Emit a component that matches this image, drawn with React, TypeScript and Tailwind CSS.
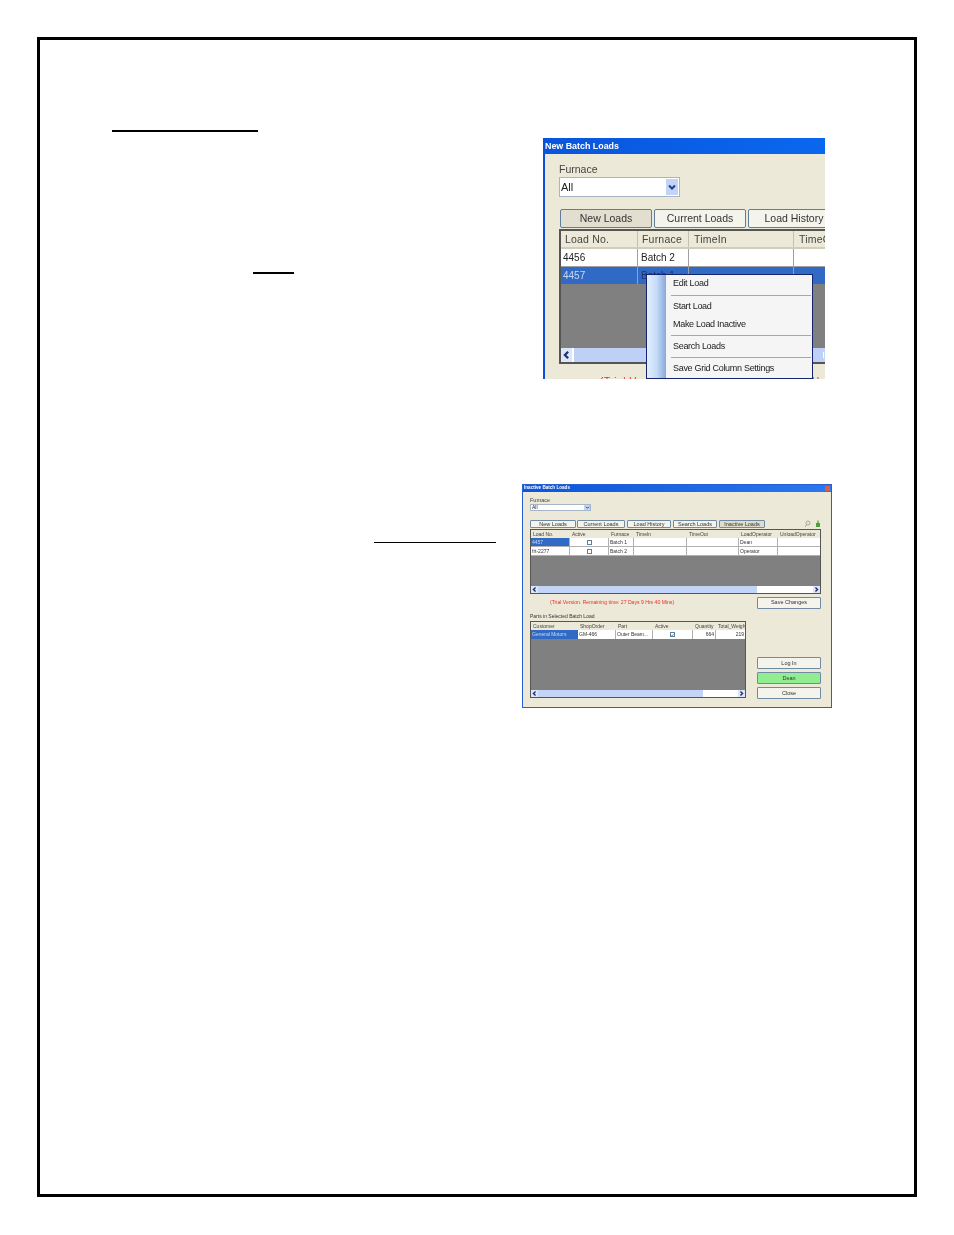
const sans = "font-['Liberation_Sans',Arial,sans-serif]";

function Chevron({ className }: { className: string }) {
  return (
    <svg viewBox="0 0 10 10" className={className} fill="none" stroke="#1f3f8f" strokeWidth="2">
      <path d="M2 3.5 L5 6.5 L8 3.5" />
    </svg>
  );
}

function Arrow({ dir }: { dir: "left" | "right" }) {
  return (
    <svg viewBox="0 0 10 10" className="w-full h-full" fill="none" stroke="#1f2f6f" strokeWidth="2">
      <path d={dir === "left" ? "M6.5 2 L3.5 5 L6.5 8" : "M3.5 2 L6.5 5 L3.5 8"} />
    </svg>
  );
}

function MenuItem({ label, className }: { label: string; className: string }) {
  return <div className={`pl-[7px] text-[9px] leading-[12px] text-[#222] tracking-[-0.3px] whitespace-nowrap ${className}`}>{label}</div>;
}

function MenuSep({ className }: { className: string }) {
  return <div className={`ml-[5px] mr-[1px] h-px bg-[#8fa9d8] ${className}`}></div>;
}

function ContextMenu() {
  return (
    <div className="absolute left-[101px] top-[136px] w-[167px] h-[105px] flex bg-[#f5f5f5] border border-[#14246e]">
      <div className="w-[19px] bg-gradient-to-r from-[#e3efff] via-[#c6dcf8] to-[#88a8dc]"></div>
      <div className="flex-1">
        <MenuItem label="Edit Load" className="mt-[2px]" />
        <MenuSep className="mt-[6px]" />
        <MenuItem label="Start Load" className="mt-[4px]" />
        <MenuItem label="Make Load Inactive" className="mt-[6px]" />
        <MenuSep className="mt-[5px]" />
        <MenuItem label="Search Loads" className="mt-[4px]" />
        <MenuSep className="mt-[5px]" />
        <MenuItem label="Save Grid Column Settings" className="mt-[4px]" />
      </div>
    </div>
  );
}

function Tab1({ label, className }: { label: string; className: string }) {
  return (
    <div className={`h-[19px] shrink-0 flex items-center justify-center border border-[#5d7f9b] rounded-[2px] text-[10.5px] text-[#333] ${className}`}>
      {label}
    </div>
  );
}

function NewBatchLoads() {
  return (
    <div className={`relative w-[282px] h-[241px] overflow-hidden bg-[#ece9d8] border-l-2 border-[#0b4fd8] blur-[0.3px] ${sans}`}>
      <div className="h-[16px] bg-gradient-to-r from-[#0a55dc] to-[#0a68ee] text-white text-[8.9px] leading-[17px] font-bold whitespace-nowrap">
        New Batch Loads
      </div>
      <div className="pl-[14px] w-[400px]">
        <div className="pt-[9px] h-[23px] text-[10.5px] leading-[12px] text-[#444]">Furnace</div>
        <div className="w-[121px] h-[20px] flex items-center justify-between bg-white border border-[#a5b6c9] pl-[1px] pr-[1px] text-[11px] text-[#222]">
          <span>All</span>
          <div className="w-[12px] h-[16px] bg-[#c3d4f7] flex items-center justify-center">
            <Chevron className="w-[10px] h-[10px]" />
          </div>
        </div>
        <div className="mt-[12px] flex gap-[2px] pl-[1px]">
          <Tab1 label="New Loads" className="w-[92px] bg-[#e2dfd0]" />
          <Tab1 label="Current Loads" className="w-[92px] bg-[#f4f3ec]" />
          <Tab1 label="Load History" className="w-[92px] bg-[#f4f3ec]" />
        </div>
        <div className="mt-[1px] h-[135px] w-[340px] flex flex-col bg-[#808080] border-l-2 border-t-2 border-b-2 border-[#555]">
          <div className="h-[18px] flex bg-[#ece9d8] border-b-2 border-[#d0cdbc] text-[10.5px] leading-[17px] tracking-[0.2px] text-[#444]">
            <div className="w-[77px] pl-[4px] border-r border-[#c4c1b0]">Load No.</div>
            <div className="w-[51px] pl-[4px] border-r border-[#c4c1b0]">Furnace</div>
            <div className="w-[105px] pl-[5px] border-r border-[#c4c1b0]">TimeIn</div>
            <div className="pl-[5px]">TimeOut</div>
          </div>
          <div className="h-[18px] flex bg-white border-b border-[#a0a0a0] text-[10px] leading-[18px] text-[#222]">
            <div className="w-[77px] pl-[2px] border-r border-[#a0a0a0]">4456</div>
            <div className="w-[51px] pl-[3px] border-r border-[#a0a0a0]">Batch 2</div>
            <div className="w-[105px] border-r border-[#a0a0a0]"></div>
          </div>
          <div className="h-[17px] flex bg-[#316ac5] text-[10px] leading-[17px] text-[#c8d8f4]">
            <div className="w-[77px] pl-[2px] border-r border-[#a0a0a0]">4457</div>
            <div className="w-[51px] pl-[3px] border-r border-[#a0a0a0] text-[#20306a]">Batch 1</div>
            <div className="w-[105px] border-r border-[#a0a0a0]"></div>
          </div>
          <div className="flex-1"></div>
          <div className="h-[14px] flex bg-[#c3d4f7]">
            <div className="w-[11px] bg-[#dbe6fb]">
              <Arrow dir="left" />
            </div>
            <div className="w-[2px] bg-white"></div>
            <div className="w-[249px] bg-[#bed0f6]"></div>
            <div className="flex gap-[1px] items-center">
              <div className="w-px h-[6px] bg-white"></div>
              <div className="w-px h-[6px] bg-white"></div>
              <div className="w-px h-[6px] bg-white"></div>
            </div>
          </div>
        </div>
        <div className="mt-[12px] ml-[41px] text-[10px] leading-[11px] text-[#e83030] whitespace-nowrap tracking-[0.6px]">
          (Trial Version. Remaining time: 27 Days 9 Hrs 40 Mins)
        </div>
      </div>
      <ContextMenu />
    </div>
  );
}

function Tab2({ label, className }: { label: string; className: string }) {
  return (
    <div className={`h-[8px] shrink-0 flex items-center justify-center border border-[#6f8aa3] rounded-[1px] text-[5.5px] text-[#333] ${className}`}>
      {label}
    </div>
  );
}

function Check({ checked }: { checked?: boolean }) {
  return (
    <div className="w-[5px] h-[5px] bg-white border border-[#5f7f9f] flex items-center justify-center">
      {checked && (
        <svg viewBox="0 0 4 4" className="w-[4px] h-[4px]" fill="none" stroke="#2f9a3f" strokeWidth="1">
          <path d="M0.5 2 L1.6 3.2 L3.6 0.8" />
        </svg>
      )}
    </div>
  );
}

function Button2({ label, className }: { label: string; className?: string }) {
  return (
    <div className={`w-[64px] h-[12px] flex items-center justify-center border border-[#6f8aa3] rounded-[1px] text-[5.5px] text-[#333] ${className ?? "bg-[#f4f3ec]"}`}>
      {label}
    </div>
  );
}

function ScrollBar2({ thumb }: { thumb: string }) {
  return (
    <div className="h-[7px] flex bg-white">
      <div className="w-[7px] bg-[#dbe6fb]">
        <Arrow dir="left" />
      </div>
      <div className={`bg-[#c3d4f7] ${thumb}`}></div>
      <div className="flex-1"></div>
      <div className="w-[7px] bg-[#dbe6fb]">
        <Arrow dir="right" />
      </div>
    </div>
  );
}

const inactiveCols = ["w-[39px]", "w-[39px]", "w-[25px]", "w-[53px]", "w-[52px]", "w-[39px]", "flex-1"];
const inactiveHead = ["Load No.", "Active", "Furnace", "TimeIn", "TimeOut", "LoadOperator", "UnloadOperator"];
const inactiveRows = [
  { id: "4457", furnace: "Batch 1", op: "Dean", selected: true },
  { id: "frt-2277", furnace: "Batch 2", op: "Operator", selected: false },
];

const partsCols = ["w-[47px]", "w-[38px]", "w-[37px]", "w-[40px]", "w-[23px]", "flex-1"];
const partsHead = ["Customer", "ShopOrder", "Part", "Active", "Quantity", "Total_Weight"];

function InactiveBatchLoads() {
  return (
    <div className={`w-[310px] h-[224px] overflow-hidden bg-[#ece9d8] border border-[#2a5fd0] blur-[0.5px] ${sans}`}>
      <div className="h-[7px] flex items-center justify-between pl-[1px] pr-[1px] bg-gradient-to-r from-[#0a55dc] to-[#2a78ee] text-white text-[4.6px] font-bold">
        <span>Inactive Batch Loads</span>
        <div className="w-[5px] h-[5px] bg-[#d8604a]"></div>
      </div>
      <div className="pl-[7px]">
        <div className="pt-[4px] h-[12px] text-[5.5px] leading-[8px] text-[#444]">Furnace</div>
        <div className="w-[61px] h-[7px] flex items-center justify-between bg-white border border-[#a5b6c9] pl-[1px] text-[5px] text-[#222]">
          <span>All</span>
          <div className="w-[6px] h-[5px] bg-[#c3d4f7] flex items-center justify-center">
            <Chevron className="w-[5px] h-[5px]" />
          </div>
        </div>
        <div className="mt-[9px] w-[291px] flex items-center gap-[1px]">
          <Tab2 label="New Loads" className="w-[46px] bg-[#f4f3ec]" />
          <Tab2 label="Current Loads" className="w-[48px] bg-[#f4f3ec]" />
          <Tab2 label="Load History" className="w-[44px] ml-[1px] bg-[#f4f3ec]" />
          <Tab2 label="Search Loads" className="w-[44px] ml-[1px] bg-[#f4f3ec]" />
          <Tab2 label="Inactive Loads" className="w-[46px] ml-[1px] bg-[#dfdccc]" />
          <svg viewBox="0 0 16 8" className="ml-auto w-[16px] h-[8px]">
            <circle cx="3" cy="3" r="2" fill="none" stroke="#8a9a8a" strokeWidth="0.8" />
            <path d="M1.5 4.5 L0 7" stroke="#8a9a8a" strokeWidth="0.8" />
            <path d="M11 3 h4 v4 h-4 z" fill="#4f9f3a" />
            <path d="M13 0.5 v3" stroke="#4f9f3a" strokeWidth="1.2" />
          </svg>
        </div>
        <div className="mt-[1px] w-[291px] h-[65px] flex flex-col bg-[#808080] border border-[#555]">
          <div className="h-[8px] flex bg-[#ece9d8] text-[5px] leading-[8px] text-[#444]">
            {inactiveHead.map((h, i) => (
              <div key={h} className={`${inactiveCols[i]} pl-[2px] whitespace-nowrap overflow-hidden`}>{h}</div>
            ))}
          </div>
          {inactiveRows.map((r) => (
            <div key={r.id} className="h-[9px] flex bg-white border-b border-[#b0b0b0] text-[5px] leading-[8px] text-[#333]">
              <div className={`${inactiveCols[0]} pl-[1px] border-r border-[#b0b0b0] ${r.selected ? "bg-[#316ac5] text-[#c8d8f4]" : ""}`}>{r.id}</div>
              <div className={`${inactiveCols[1]} flex items-center justify-center border-r border-[#b0b0b0]`}><Check /></div>
              <div className={`${inactiveCols[2]} pl-[1px] border-r border-[#b0b0b0]`}>{r.furnace}</div>
              <div className={`${inactiveCols[3]} border-r border-[#b0b0b0]`}></div>
              <div className={`${inactiveCols[4]} border-r border-[#b0b0b0]`}></div>
              <div className={`${inactiveCols[5]} pl-[1px] border-r border-[#b0b0b0]`}>{r.op}</div>
            </div>
          ))}
          <div className="flex-1"></div>
          <ScrollBar2 thumb="w-[219px]" />
        </div>
        <div className="mt-[3px] w-[291px] h-[11px] flex justify-between items-center">
          <div className="ml-[20px] text-[5.1px] text-[#e83030] whitespace-nowrap">
            (Trial Version. Remaining time: 27 Days 9 Hrs 40 Mins)
          </div>
          <Button2 label="Save Changes" className="h-[11px] bg-[#f4f3ec]" />
        </div>
        <div className="w-[291px] flex justify-between">
          <div className="w-[216px]">
            <div className="mt-[4px] h-[9px] text-[5px] leading-[8px] text-[#333]">Parts in Selected Batch Load</div>
            <div className="h-[77px] flex flex-col bg-[#808080] border border-[#555]">
              <div className="h-[8px] flex bg-[#ece9d8] text-[5px] leading-[8px] text-[#444]">
                {partsHead.map((h, i) => (
                  <div key={h} className={`${partsCols[i]} pl-[2px] whitespace-nowrap overflow-hidden`}>{h}</div>
                ))}
              </div>
              <div className="h-[9px] flex bg-white text-[5px] leading-[9px] text-[#333]">
                <div className={`${partsCols[0]} pl-[1px] bg-[#316ac5] text-[#c8d8f4] whitespace-nowrap`}>General Motors</div>
                <div className={`${partsCols[1]} pl-[1px] border-r border-[#b0b0b0]`}>GM-466</div>
                <div className={`${partsCols[2]} pl-[1px] border-r border-[#b0b0b0] whitespace-nowrap overflow-hidden`}>Outer Beam...</div>
                <div className={`${partsCols[3]} flex items-center justify-center border-r border-[#b0b0b0]`}><Check checked /></div>
                <div className={`${partsCols[4]} pr-[1px] text-right border-r border-[#b0b0b0]`}>664</div>
                <div className={`${partsCols[5]} pr-[1px] text-right`}>219</div>
              </div>
              <div className="flex-1"></div>
              <ScrollBar2 thumb="w-[165px]" />
            </div>
          </div>
          <div className="w-[64px] pt-[49px] flex flex-col gap-[3px]">
            <Button2 label="Log In" />
            <Button2 label="Dean" className="bg-[#90ee90]" />
            <Button2 label="Close" />
          </div>
        </div>
      </div>
    </div>
  );
}

export default function App() {
  return (
    <div className="w-[954px] h-[1235px] bg-white pt-[37px] pl-[37px]">
      <div className="w-[880px] h-[1160px] border-[3px] border-black">
        {/* top block */}
        <div className="flex pt-[90px] pl-[72px]">
          <div className="w-[431px]">
            <div className="w-[146px] h-[2px] bg-black"></div>
            <div className="mt-[140px] ml-[141px] w-[41px] h-[2px] bg-black"></div>
          </div>
          <div className="mt-[8px]">
            <NewBatchLoads />
          </div>
        </div>

        {/* second block */}
        <div className="flex mt-[105px]">
          <div className="w-[482px] pl-[334px] pt-[58px]">
            <div className="w-[122px] h-[1px] bg-black"></div>
          </div>
          <InactiveBatchLoads />
        </div>
      </div>
    </div>
  );
}
